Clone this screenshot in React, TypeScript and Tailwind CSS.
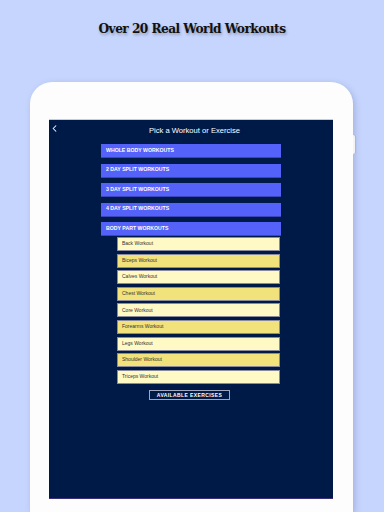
import { ChevronLeft } from "lucide-react";

const sections = [
  "WHOLE BODY WORKOUTS",
  "2 DAY SPLIT WORKOUTS",
  "3 DAY SPLIT WORKOUTS",
  "4 DAY SPLIT WORKOUTS",
  "BODY PART WORKOUTS",
];

const bodyParts = [
  "Back Workout",
  "Biceps Workout",
  "Calves Workout",
  "Chest Workout",
  "Core Workout",
  "Forearms Workout",
  "Legs Workout",
  "Shoulder Workout",
  "Triceps Workout",
];

export default function App() {
  return (
    <div className="w-[384px] h-[512px] overflow-hidden bg-[#c6d5fd] flex flex-col font-['Liberation_Sans',Arial,sans-serif]">
      {/* Headline */}
      <div className="h-[82px] shrink-0 pt-[19px] flex justify-center">
        <h1 className="text-[12.2px] leading-[20px] font-bold tracking-[-0.55px] text-[#111] font-['DejaVu_Serif',serif] [text-shadow:1px_2px_3px_rgba(0,0,0,0.28)]">
          Over 20 Real World Workouts
        </h1>
      </div>

      {/* Tablet */}
      <div className="relative ml-[30px] w-[323px] flex-1 rounded-t-[22px] bg-[#fdfdfd] shadow-[2px_2px_6px_rgba(60,80,140,0.25)] pt-[37px] pl-[19px] pr-[20px]">
        <div className="absolute right-[-2px] top-[53px] w-[2px] h-[19px] rounded-r-sm bg-[#f4f4f4] shadow-[1px_0_1px_rgba(0,0,0,0.08)]" />

        {/* Screen */}
        <div className="h-[380px] bg-[#001a48] border-t border-[#c9cbd6] border-b border-b-[#3a2f7a] flex flex-col">
          {/* Header */}
          <div className="h-[21px] relative flex items-center justify-center">
            <ChevronLeft size={11} strokeWidth={2.2} className="absolute left-[0px] top-[3px] text-white" />
            <span className="ml-[7px] text-[7.6px] text-white">Pick a Workout or Exercise</span>
          </div>

          <div className="ml-[52px] mt-[3px] w-[180px] flex flex-col gap-[5.5px]">
            {sections.map((s) => (
              <div
                key={s}
                className="h-[14px] bg-[#5462f9] border-b border-[#3c45b8] flex items-center pl-[5px] text-[5.2px] font-bold text-white"
              >
                {s}
              </div>
            ))}
          </div>

          <div className="ml-[68px] mt-[1px] w-[163px] flex flex-col gap-[2.6px]">
            {bodyParts.map((p, i) => (
              <div
                key={p}
                className={`h-[14px] border border-[#8a8a9a] flex items-center pl-[4px] text-[5px] text-[#333] ${
                  i % 2 === 0 ? "bg-[#fff9c6]" : "bg-[#f2e27c]"
                }`}
              >
                {p}
              </div>
            ))}
          </div>

          <div className="mt-[6.5px] ml-[100px] w-[81px] h-[10px] border border-[#a2a7bd] flex items-center justify-center text-[5px] font-bold tracking-[0.4px] text-white">
            AVAILABLE EXERCISES
          </div>
        </div>
      </div>
    </div>
  );
}
